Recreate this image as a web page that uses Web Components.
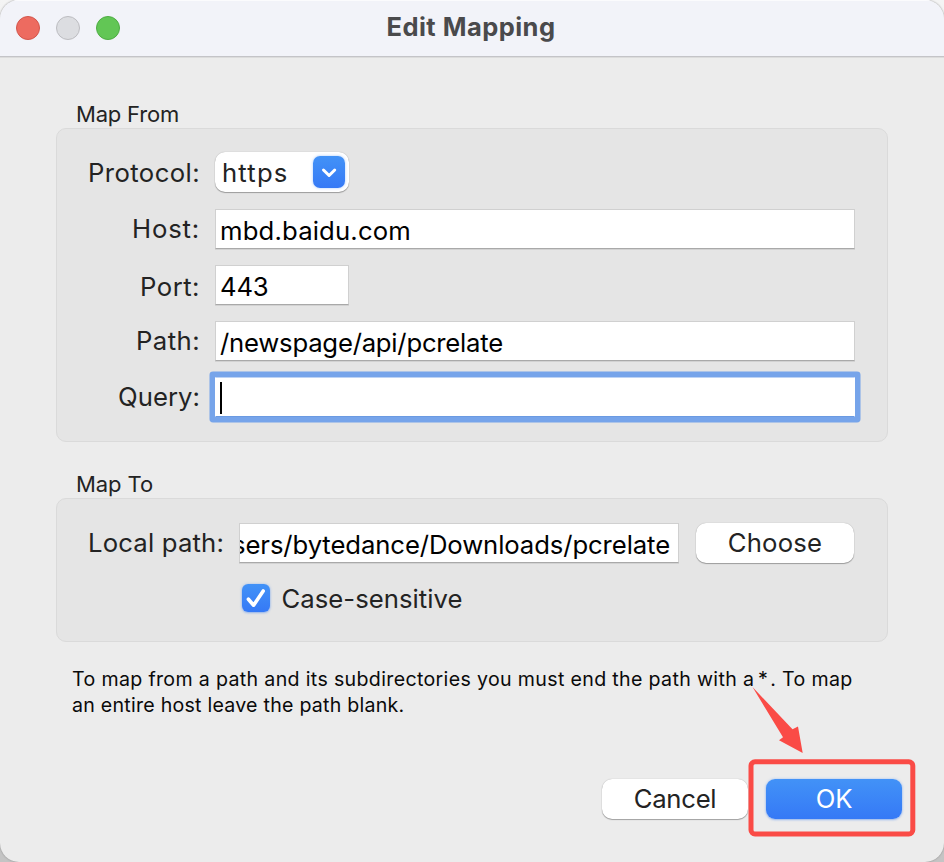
<!DOCTYPE html>
<html lang="en">
<head>
<meta charset="utf-8">
<title>Edit Mapping</title>
<style>
  html, body { margin: 0; width: 944px; height: 862px; overflow: hidden; background: linear-gradient(#f4f4f4, #c4c4c4); }
  body { font-family: Inter, "Liberation Sans", sans-serif; color: #232323; }
  .star { margin: 0 2px 0 -2px; }
</style>
</head>
<body>
<mac-window>
  <title-bar slot="bar"><fit-text w="169" size="25.5" weight="700">Edit Mapping</fit-text></title-bar>
  <group-box style="height:348px">
    <fit-text slot="legend" w="103" size="22">Map From</fit-text>
    <form-row style="margin-bottom:16px"><fit-text slot="label" w="112">Protocol:</fit-text><pop-up><fit-text w="66.5">https</fit-text></pop-up></form-row>
    <form-row><fit-text slot="label" w="68">Host:</fit-text><text-field style="width:640px"><fit-text w="191">mbd.baidu.com</fit-text></text-field></form-row>
    <form-row style="--shift:2px"><fit-text slot="label" w="60">Port:</fit-text><text-field style="width:134px"><fit-text w="48.5">443</fit-text></text-field></form-row>
    <form-row><fit-text slot="label" w="64">Path:</fit-text><text-field style="width:640px"><fit-text w="283">/newspage/api/pcrelate</fit-text></text-field></form-row>
    <form-row><fit-text slot="label" w="82">Query:</fit-text><text-field focused style="width:640px"></text-field></form-row>
  </group-box>
  <group-box style="height:178px">
    <fit-text slot="legend" w="77" size="22">Map To</fit-text>
    <form-row style="--label:168px"><fit-text slot="label" w="136">Local path:</fit-text><text-field end style="width:440px"><fit-text w="438">sers/bytedance/Downloads/pcrelate</fit-text></text-field><push-button style="width:158px;margin-left:17px"><fit-text w="94.5">Choose</fit-text></push-button></form-row>
    <form-row style="--label:171px"><check-box><fit-text w="181">Case-sensitive</fit-text></check-box></form-row>
  </group-box>
  <help-note><fit-text w="778" size="19.6">To map from a path and its subdirectories you must end the path with a <span class="star">*</span>. To map</fit-text><fit-text w="332.5" size="19.6">an entire host leave the path blank.</fit-text></help-note>
  <button-bar>
    <push-button style="width:146px"><fit-text w="82.5">Cancel</fit-text></push-button>
    <call-out><push-button primary style="width:136px"><fit-text w="36.5">OK</fit-text></push-button></call-out>
  </button-bar>
</mac-window>
<script>
const define = (name, html, connected) => customElements.define(name, class extends HTMLElement {
  constructor() {
    super();
    this.attachShadow({ mode: 'open' }).innerHTML = html;
  }
  connectedCallback() { if (connected) connected.call(this); }
});

// Text set to a given advance width by adjusting its tracking.
const pen = document.createElement('canvas').getContext('2d');
define('fit-text', `<style>:host{display:block;white-space:nowrap;flex:none}</style><slot></slot>`, function () {
  const size = this.getAttribute('size') || 25.7;
  const weight = this.getAttribute('weight') || 430;
  const w = +this.getAttribute('w');
  const text = this.textContent;
  pen.font = `${weight} ${size}px Inter, "Liberation Sans", sans-serif`;
  this.style.fontSize = size + 'px';
  this.style.fontWeight = weight;
  this.style.width = w + 'px';
  this.style.letterSpacing = ((w - pen.measureText(text).width) / text.length).toFixed(3) + 'px';
});

define('mac-window', `<style>
  :host{display:flex;flex-direction:column;box-sizing:border-box;width:944px;height:862px;background:#ececec;border-radius:19px;overflow:hidden;box-shadow:0 0 2px #888}
  main{display:flex;flex-direction:column;padding:36px 56px 0;gap:22px}
</style><slot name="bar"></slot><main><slot></slot></main>`);

define('title-bar', `<style>
  :host{display:grid;grid-template-columns:1fr auto 1fr;align-items:center;box-sizing:border-box;height:58px;padding:0 16px 2px;background:#f2f3f9;border-bottom:1px solid #dcdcdc;box-shadow:inset 0 1px #fbfbfd,inset 0 -1px #c4c4c8;color:#4a4a4c;line-height:52px}
  div{display:flex;gap:16px}
  i{width:24px;height:24px;border-radius:50%;box-sizing:border-box;background:#ed6b60;border:1px solid #d2564c}
  i:nth-child(2){background:#dcdde1;border-color:#bcbcc0}
  i:nth-child(3){background:#62c655;border-color:#4eac43}
  ::slotted(*){margin:-1px 1px 0 -1px}
</style><div><i></i><i></i><i></i></div><slot></slot><span></span>`);

define('group-box', `<style>
  :host{display:flex;flex-direction:column;flex:none}
  header{padding-left:20px;height:34px;line-height:41px}
  section{flex:1;box-sizing:border-box;background:#e5e5e5;border:1px solid #dadada;border-radius:10px;padding:24px 0 0}
</style><header><slot name="legend"></slot></header><section><slot></slot></section>`);

define('form-row', `<style>
  :host{display:flex;height:40px;margin-bottom:16px}
  label{display:flex;justify-content:flex-end;width:calc(var(--label,144px) - 1px);margin-right:15px;line-height:40px;padding-top:var(--shift,0px);box-sizing:border-box}
</style><label><slot name="label"></slot></label><slot></slot>`);

define('text-field', `<style>
  :host{display:flex;box-sizing:border-box;height:40px;background:#fff;border:1px solid #d0d0d0;border-bottom-color:#a9a9a9;padding-left:4px;color:#000;line-height:42px;overflow:hidden;box-shadow:0 1px 0 #d2d2d2}
  :host([end]){justify-content:flex-end;padding:0 8px 0 0}
  :host([focused]){border-color:#bdd3f5 #fff #6a9ae2;box-shadow:0 0 0 5.5px #76a4ea;border-radius:1px}
  i{display:none;width:2px;height:32px;margin-top:4px;background:#000}
  :host([focused]) i{display:block}
</style><i></i><slot></slot>`);

define('pop-up', `<style>
  :host{display:flex;align-items:center;justify-content:space-between;box-sizing:border-box;width:134px;height:40px;margin-top:-1px;background:#fff;border-radius:10px;padding:0 4px 0 7px;line-height:42px;box-shadow:0 1px 1px #0000004d,0 0 1px #0000004d}
  ::slotted(*){padding-top:2px}
  span{display:grid;place-items:center;width:32px;height:32px;border-radius:7px;background:linear-gradient(#4292f7,#3579f6);box-shadow:0 0 3px #4a94ff80}
</style><slot></slot><span><svg width="32" height="32" viewBox="0 0 32 32" fill="none" stroke="#fff" stroke-width="3" stroke-linecap="round" stroke-linejoin="round"><path d="M10.5 14l5.6 5.5 5.6-5.5"/></svg></span>`);

define('push-button', `<style>
  :host{display:flex;justify-content:center;box-sizing:border-box;flex:none;height:40px;background:#fff;border-radius:10px;line-height:40px;box-shadow:0 1px 1px #0000004d,0 0 1px #0000004d}
  :host([primary]){background:linear-gradient(#4292f7,#3579f6);color:#fff;border-radius:9px;box-shadow:0 0 3px #4a94ff66,0 1px 2px #4a84ef66}
</style><slot></slot>`);

define('check-box', `<style>
  :host{display:flex;align-items:center;gap:11.5px;line-height:40px}
  svg{border-radius:6px;background:linear-gradient(#4292f7,#3579f6);box-shadow:0 0 3px #4a94ff66,0 1px 2px #4a84ef66;margin-top:-2px}
</style><svg width="28" height="28" viewBox="0 0 28 28" fill="none" stroke="#fff" stroke-width="3.6" stroke-linecap="round" stroke-linejoin="round"><path d="M6.4 15.2l5.2 6L21.2 7"/></svg><slot></slot>`);

define('help-note', `<style>:host{display:block;padding:2px 0 0 16px;line-height:26px;color:#0a0a0a}</style><slot></slot>`);

define('button-bar', `<style>:host{display:flex;justify-content:flex-end;margin:39px -14px 0 0;gap:18px}</style><slot></slot>`);

// Red frame and arrow laid over the button they point at.
define('call-out', `<style>
  :host{display:block;position:relative}
  svg{position:absolute;left:-20px;top:-95px;pointer-events:none}
</style><slot></slot><svg width="178" height="160" viewBox="746 684 178 160"><path fill="#fa4b46" d="M752.5 687L792.5 729.3 798 726.5 802.7 753 779 740.3 783 737.3z"/><rect x="751" y="761.8" width="161.8" height="72.2" rx="4" fill="none" stroke="#fa4b46" stroke-width="5"/></svg>`);
</script>
</body>
</html>
